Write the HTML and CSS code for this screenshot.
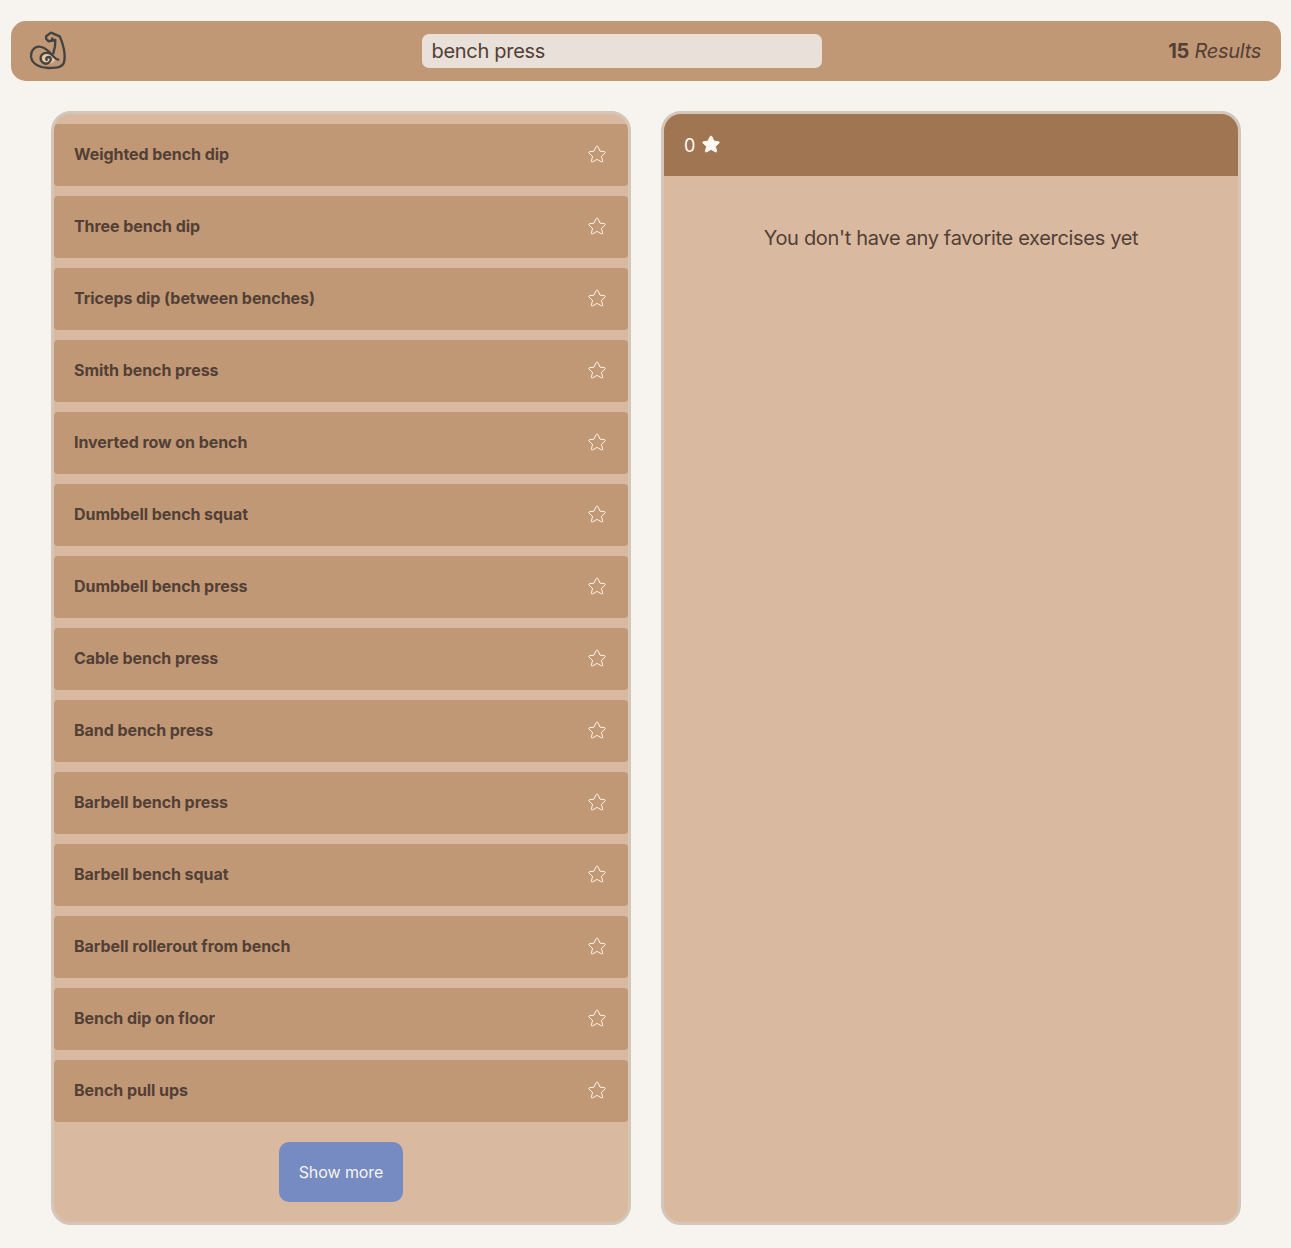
FILE: index.html
```html
<!DOCTYPE html>
<html lang="en">
<head>
<meta charset="utf-8">
<title>Exercises</title>
<link rel="stylesheet" href="styles.css">
</head>
<body>
<svg class="sprite" aria-hidden="true">
  <symbol id="star" viewBox="0 0 20 20"><path d="M10 1.2c.5 0 .8.3 1.1.8l2.2 4.8 5 .6c1 .1 1.2 1 .6 1.6l-4 3.7 1.4 5.2c.2.8-.6 1.3-1.3.9L10 16l-5 2.8c-.7.4-1.5-.1-1.3-.9l1.4-5.2-4-3.7c-.6-.6-.4-1.5.6-1.6l5-.6L8.9 2c.3-.5.6-.8 1.1-.8z"/></symbol>
</svg>
<header class="header">
  <svg class="logo" viewBox="21 24 126 126">
    <path class="logo-fill" d="M62 108C58 90 75 86 88 90L109 109C101 124 88 129 74 126Z"/>
    <path d="M115 113C106 112 99 102 89 91C77 79 66 73 54 74C40 76 32 90 33 104C36 127 61 139 88 138C112 137 129 135 132 121C138 98 129 64 119 43L93 32L79 42L78 50L86 58L95 55L97 49M86 58L106 54L105 73L100 94"/>
    <path d="M94 97C80 87 62 94 62 109C62 123 78 129 87 122C95 116 94 106 86 105C79 105 77 111 80 114"/>
  </svg>
  <input class="search" type="text" value="bench press" aria-label="Search exercises">
  <p class="count"><strong>15</strong> <em>Results</em></p>
</header>
<main class="panels">
  <section class="panel results">
    <ul class="list">
      <li class="item">Weighted bench dip<svg class="star"><use href="#star"/></svg></li>
      <li class="item">Three bench dip<svg class="star"><use href="#star"/></svg></li>
      <li class="item">Triceps dip (between benches)<svg class="star"><use href="#star"/></svg></li>
      <li class="item">Smith bench press<svg class="star"><use href="#star"/></svg></li>
      <li class="item">Inverted row on bench<svg class="star"><use href="#star"/></svg></li>
      <li class="item">Dumbbell bench squat<svg class="star"><use href="#star"/></svg></li>
      <li class="item">Dumbbell bench press<svg class="star"><use href="#star"/></svg></li>
      <li class="item">Cable bench press<svg class="star"><use href="#star"/></svg></li>
      <li class="item">Band bench press<svg class="star"><use href="#star"/></svg></li>
      <li class="item">Barbell bench press<svg class="star"><use href="#star"/></svg></li>
      <li class="item">Barbell bench squat<svg class="star"><use href="#star"/></svg></li>
      <li class="item">Barbell rollerout from bench<svg class="star"><use href="#star"/></svg></li>
      <li class="item">Bench dip on floor<svg class="star"><use href="#star"/></svg></li>
      <li class="item">Bench pull ups<svg class="star"><use href="#star"/></svg></li>
    </ul>
    <button class="more">Show more</button>
  </section>
  <section class="panel">
    <div class="favorites-bar"><span class="favorites-count">0</span><svg class="star star-filled"><use href="#star"/></svg></div>
    <p class="empty">You don't have any favorite exercises yet</p>
  </section>
</main>
</body>
</html>
```

FILE: styles.css
```css
* { box-sizing: border-box; margin: 0; padding: 0; }
body {
  background: #f7f3ee;
  color: #523f35;
  font: 20px/24px Inter, sans-serif;
  letter-spacing: -0.32px;
  padding: 21px 10px 0 11px;
}
.sprite { position: absolute; width: 0; height: 0; }
.header {
  display: flex;
  align-items: center;
  justify-content: space-between;
  height: 60px;
  margin-bottom: 30px;
  padding: 0 20px 0 16px;
  border-radius: 15px;
  background: #c19875;
}
.logo {
  width: 42px;
  height: 42px;
  margin-right: 9px;
  fill: none;
  stroke: #424443;
  stroke-width: 7;
  stroke-linejoin: round;
  stroke-linecap: round;
}
.logo-fill { fill: #ecc6a0; stroke: none; }
.search {
  width: 400px;
  height: 34px;
  margin: 0 auto 0 344px;
  padding: 0 9.5px;
  border: 0;
  border-radius: 7px;
  outline: 0;
  background: #e8e0d9;
  color: inherit;
  font: inherit;
  letter-spacing: -0.3px;
}
.count { letter-spacing: -0.28px; }
.panels {
  display: grid;
  grid-template-columns: 1fr 1fr;
  gap: 30px;
  height: 1114px;
  padding: 0 40px;
}
.panel {
  overflow: hidden;
  border: 3px solid #d4c6b9;
  border-radius: 20px;
  background: #d9b99f;
}
.results {
  display: flex;
  flex-direction: column;
  align-items: center;
  gap: 20px;
  padding-top: 10px;
}
.list {
  display: flex;
  flex-direction: column;
  gap: 10px;
  width: 100%;
  list-style: none;
}
.item {
  display: flex;
  align-items: center;
  justify-content: space-between;
  height: 62px;
  padding: 0 22px 2px 20px;
  border-radius: 4px;
  background: #c19875;
  font-size: 16px;
  font-weight: 700;
  letter-spacing: -0.06px;
}
.star {
  width: 18px;
  height: 18px;
  overflow: visible;
  fill: none;
  stroke: #fff3e9;
  stroke-width: 1.1;
}
.more {
  width: 124px;
  height: 60px;
  border: 0;
  border-radius: 10px;
  background: #768bc1;
  color: #f7f3ee;
  font: 16px Inter, sans-serif;
  letter-spacing: -0.08px;
}
.favorites-bar {
  display: flex;
  align-items: center;
  gap: 7px;
  height: 62px;
  padding: 0 20px;
  background: #a07552;
  color: #fffaf6;
  font-size: 18px;
}
.favorites-count { padding-top: 1px; }
.star-filled { margin-bottom: 2px; fill: #fffaf6; }
.empty { margin-top: 50px; text-align: center; }
```
